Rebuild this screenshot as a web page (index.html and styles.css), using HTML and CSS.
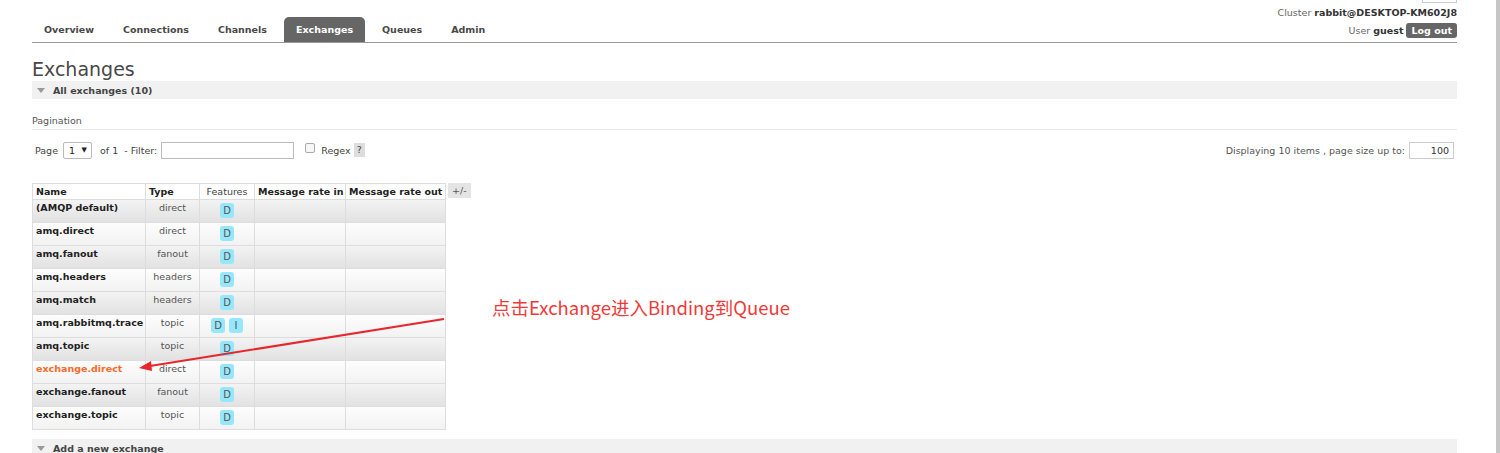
FILE: index.html
```html
<!DOCTYPE html>
<html>
<head>
<meta charset="utf-8">
<link rel="stylesheet" href="styles.css">
</head>
<body>
<div class="page">
  <header class="top">
    <ul class="tabs">
      <li class="tab">Overview</li>
      <li class="tab">Connections</li>
      <li class="tab">Channels</li>
      <li class="tab active">Exchanges</li>
      <li class="tab">Queues</li>
      <li class="tab">Admin</li>
    </ul>
    <div class="userinfo">
      <div class="refresh"></div>
      <div class="cluster">Cluster <b>rabbit@DESKTOP-KM602J8</b></div>
      <div class="user">User <b>guest</b> <span class="logout">Log out</span></div>
    </div>
  </header>

  <main class="main">
    <h1 class="title">Exchanges</h1>
    <div class="section-h"><span class="tri"></span>All exchanges (10)</div>
    <div class="section-body">
      <div class="pag-label">Pagination</div>
      <div class="pag-row">
        <div class="pag-left">
          <span>Page</span>
          <span class="select">1 <span class="caret">▼</span></span>
          <span class="of">of 1&nbsp; - Filter:</span>
          <span class="filter"></span>
          <span class="check"></span>
          <span>Regex</span>
          <span class="help">?</span>
        </div>
        <div class="pag-right">
          <span>Displaying 10 items , page size up to:</span>
          <span class="pagesize">100</span>
        </div>
      </div>

      <div class="tablewrap">
        <table class="list">
          <colgroup>
            <col class="c-name"><col class="c-type"><col class="c-feat"><col class="c-in"><col class="c-out">
          </colgroup>
          <thead>
            <tr><th class="l">Name</th><th class="l">Type</th><th class="feat-h">Features</th><th class="l">Message rate in</th><th class="l">Message rate out</th></tr>
          </thead>
          <tbody>
            <tr class="alt1"><td class="name">(AMQP default)</td><td class="type">direct</td><td class="feat"><span class="badge">D</span></td><td></td><td></td></tr>
            <tr class="alt2"><td class="name">amq.direct</td><td class="type">direct</td><td class="feat"><span class="badge">D</span></td><td></td><td></td></tr>
            <tr class="alt1"><td class="name">amq.fanout</td><td class="type">fanout</td><td class="feat"><span class="badge">D</span></td><td></td><td></td></tr>
            <tr class="alt2"><td class="name">amq.headers</td><td class="type">headers</td><td class="feat"><span class="badge">D</span></td><td></td><td></td></tr>
            <tr class="alt1"><td class="name">amq.match</td><td class="type">headers</td><td class="feat"><span class="badge">D</span></td><td></td><td></td></tr>
            <tr class="alt2"><td class="name">amq.rabbitmq.trace</td><td class="type">topic</td><td class="feat"><span class="badge">D</span> <span class="badge">I</span></td><td></td><td></td></tr>
            <tr class="alt1"><td class="name">amq.topic</td><td class="type">topic</td><td class="feat"><span class="badge">D</span></td><td></td><td></td></tr>
            <tr class="alt2"><td class="name hot">exchange.direct</td><td class="type">direct</td><td class="feat"><span class="badge">D</span></td><td></td><td></td></tr>
            <tr class="alt1"><td class="name">exchange.fanout</td><td class="type">fanout</td><td class="feat"><span class="badge">D</span></td><td></td><td></td></tr>
            <tr class="alt2"><td class="name">exchange.topic</td><td class="type">topic</td><td class="feat"><span class="badge">D</span></td><td></td><td></td></tr>
          </tbody>
        </table>
        <span class="plusminus">+/-</span>
      </div>
    </div>
    <div class="section-h add"><span class="tri"></span>Add a new exchange</div>
  </main>

  <div class="note">点击Exchange进入Binding到Queue</div>
  <svg class="arrow" width="1500" height="453" viewBox="0 0 1500 453">
    <line x1="444" y1="319" x2="150" y2="366" stroke="#e8262e" stroke-width="2"/>
    <polygon points="139,368 151,361 152,371" fill="#e8262e"/>
  </svg>
</div>
</body>
</html>
```

FILE: styles.css
```css
html, body {
  margin: 0;
  padding: 0;
  background: #fff;
}

body {
  font-family: "DejaVu Sans", Verdana, sans-serif;
  font-size: 9.5px;
  color: #484848;
  overflow: hidden;
}

.page {
  position: relative;
  width: 1496px;
  height: 453px;
  border-right: 4px solid #c6c6c6;
  overflow: hidden;
}

/* header */
.top {
  display: flex;
  justify-content: space-between;
  align-items: flex-end;
  margin: 0 39px 0 32px;
  height: 42px;
  border-bottom: 1px solid #999;
}

.tabs {
  display: flex;
  gap: 5px;
  list-style: none;
  margin: 0;
  padding: 0;
}

.tab {
  height: 25px;
  line-height: 25px;
  padding: 0 12px;
  font-weight: bold;
  color: #484848;
  border-radius: 5px 5px 0 0;
}

.tab.active {
  background: #666;
  color: #fff;
}

.userinfo {
  display: flex;
  flex-direction: column;
  align-items: flex-end;
  padding-bottom: 4px;
}

.refresh {
  width: 33px;
  height: 2px;
  border: 1px solid #ccc;
  border-top: none;
  margin-bottom: 4px;
}

.cluster {
  line-height: 12px;
  color: #666;
  margin-bottom: 4px;
}
.cluster b, .user b { color: #333; }

.user {
  color: #666;
  line-height: 15px;
}

.logout {
  display: inline-block;
  background: #666;
  color: #fff;
  font-weight: bold;
  padding: 0 5px;
  border-radius: 3px;
  line-height: 15px;
}

/* main */
.main {
  margin: 0 39px 0 32px;
}

.title {
  font-size: 19px;
  font-weight: normal;
  color: #484848;
  margin: 0;
  padding-top: 15px;
  line-height: 23px;
}

.section-h {
  display: flex;
  align-items: center;
  height: 18px;
  background: #f1f1f1;
  font-weight: bold;
  color: #444;
}

.tri {
  width: 0;
  height: 0;
  border-left: 4px solid transparent;
  border-right: 4px solid transparent;
  border-top: 5px solid #999;
  margin: 0 8px 0 5px;
}

.section-body {
  padding-top: 16px;
}

.pag-label {
  color: #555;
  line-height: 12px;
  padding-bottom: 2px;
  border-bottom: 1px solid #e6e6e6;
}

.pag-row {
  display: flex;
  justify-content: space-between;
  align-items: center;
  margin-top: 11px;
  height: 18px;
}

.pag-left {
  display: flex;
  align-items: center;
  padding-left: 3px;
  color: #444;
}

.select {
  display: inline-flex;
  align-items: center;
  justify-content: space-between;
  box-sizing: border-box;
  width: 29px;
  height: 17px;
  border: 1px solid #bbb;
  border-radius: 2px;
  padding: 0 4px 0 5px;
  margin: 0 8px 0 5px;
  color: #222;
}
.caret { font-size: 7px; }

.filter {
  display: inline-block;
  box-sizing: border-box;
  width: 133px;
  height: 17px;
  border: 1px solid #bbb;
  margin: 0 11px 0 4px;
}

.check {
  display: inline-block;
  box-sizing: border-box;
  width: 10px;
  height: 10px;
  border: 1px solid #aaa;
  border-radius: 2px;
  background: #f7f7f7;
  margin: -4px 6px 0 0;
}

.help {
  display: inline-block;
  background: #ddd;
  padding: 0 3px;
  line-height: 14px;
  margin-left: 3px;
}

.pag-right {
  display: flex;
  align-items: center;
  color: #555;
  padding-right: 3px;
}

.pagesize {
  display: inline-block;
  box-sizing: border-box;
  width: 45px;
  height: 17px;
  line-height: 15px;
  border: 1px solid #ccc;
  text-align: right;
  padding-right: 4px;
  margin-left: 4px;
  color: #333;
}

/* table */
.tablewrap {
  display: flex;
  align-items: flex-start;
  margin-top: 24px;
  gap: 2px;
}

.list {
  border-collapse: collapse;
  table-layout: fixed;
  width: 413px;
}

.c-name { width: 113px; }
.c-type { width: 54px; }
.c-feat { width: 55px; }
.c-in { width: 91px; }
.c-out { width: 100px; }

.list th, .list td {
  border: 1px solid #ddd;
  padding: 0 3px;
  white-space: nowrap;
}

.list th {
  height: 15px;
  line-height: 15px;
  font-weight: bold;
  color: #222;
  text-align: left;
  background: #fff;
}

.list th.feat-h {
  font-weight: normal;
  color: #444;
  text-align: center;
}

.list tbody tr {
  height: 23px;
}

.list td {
  vertical-align: top;
  line-height: 14px;
  padding-top: 1px;
}

.alt1 { background: linear-gradient(#f3f3f3, #e1e1e1); }
.alt2 { background: linear-gradient(#fdfdfd, #f2f2f2); }

.name {
  font-weight: bold;
  color: #222;
}

.name.hot { color: #f76a28; }

.type {
  text-align: center;
  color: #555;
}

.feat {
  text-align: center;
  font-size: 0;
}

.badge {
  display: inline-block;
  font-size: 10px;
  color: #555;
  background: #96e7fb;
  border-radius: 3px;
  padding: 0 3px;
  min-width: 8px;
  line-height: 15px;
  margin: 2px 2px 0;
}

.plusminus {
  display: inline-block;
  background: #e4e4e4;
  color: #555;
  padding: 0 4px;
  line-height: 15px;
}

.section-h.add {
  margin-top: 9px;
}

/* annotation overlay */
.note {
  position: absolute;
  left: 492px;
  top: 295px;
  font-family: "Noto Sans CJK SC", "Noto Sans", sans-serif;
  font-size: 18.5px;
  line-height: 24px;
  color: #ef3a3a;
}

.arrow {
  position: absolute;
  left: 0;
  top: 0;
  pointer-events: none;
}
```
